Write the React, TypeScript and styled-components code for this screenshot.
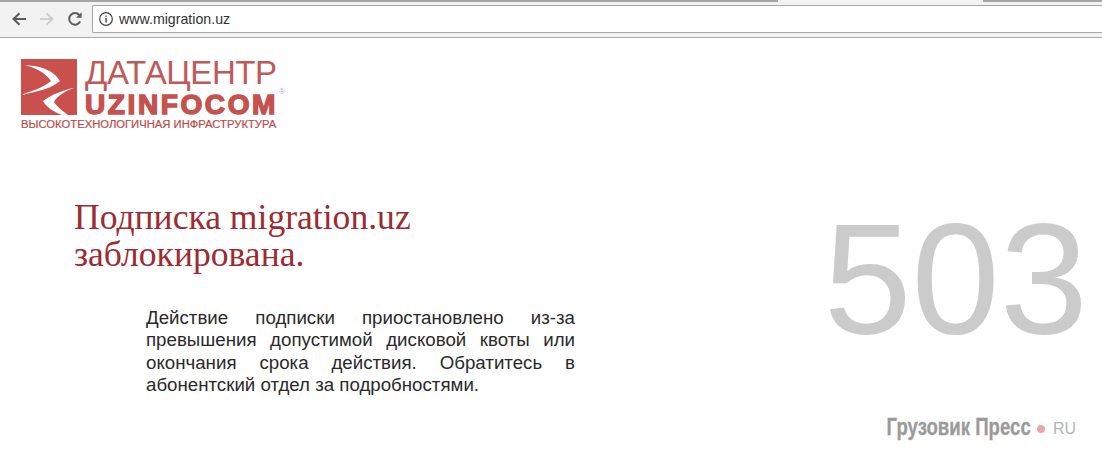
import React from 'react';
import styled, { createGlobalStyle } from 'styled-components';

const Global = createGlobalStyle`
    html, body {
        margin: 0;
        padding: 0;
        background: #fff;
    }
    body {
        width: 1102px;
        height: 456px;
        overflow: hidden;
    }
`
const Page = styled.div`
    width: 1102px;
    height: 456px;
    display: flex;
    flex-direction: column;
    overflow: hidden;
`
const TabStrip = styled.div`
    height: 2px;
    flex: none;
    background: #a6a6a6;
    display: flex;
    justify-content: flex-end;
`
const ActiveTab = styled.div`
    width: 205px;
    height: 2px;
    margin-right: 119px;
    background: #f2f2f2;
`
const Toolbar = styled.div`
    height: 36px;
    flex: none;
    box-sizing: border-box;
    background: #f2f2f2;
    border-bottom: 1px solid #a9a9a9;
    display: flex;
    align-items: flex-start;
    padding: 3px 0 0 7px;
`
const NavButton = styled.div`
    width: 23px;
    height: 28px;
    margin-right: 5px;
    display: flex;
    align-items: center;
    justify-content: center;
`
const Omnibox = styled.div`
    flex: 1;
    height: 28px;
    margin-left: 1px;
    box-sizing: border-box;
    background: #fff;
    border: 1px solid #a8a8a8;
    border-right: none;
    border-radius: 2px 0 0 2px;
    display: flex;
    align-items: center;
    padding-left: 6px;
    gap: 6px;
    font-family: "Liberation Sans", Arial, sans-serif;
    font-size: 14.2px;
    color: #333;
`
const Content = styled.div`
    flex: 1;
    display: flex;
    flex-direction: column;
    padding: 21px 14px 0 21px;
    position: relative;
`
const LogoBlock = styled.div`
    width: 270px;
    display: grid;
    grid-template-columns: 56px 1fr;
    column-gap: 8px;
    color: #c4524f;
    font-family: "Liberation Sans", Arial, sans-serif;
`
const LogoMark = styled.svg`
    grid-row: 1 / 3;
    display: block;
`
const LogoTop = styled.div`
    font-size: 33px;
    line-height: 28px;
    height: 35px;
    letter-spacing: -0.4px;
    white-space: nowrap;
    color: #bf5a5a;
`
const LogoBrand = styled.div`
    font-size: 28px;
    line-height: 21px;
    height: 21px;
    font-weight: 700;
    letter-spacing: 2.6px;
    white-space: nowrap;
    -webkit-text-stroke: 1.5px #c4524f;
    position: relative;
`
const Registered = styled.span`
    position: absolute;
    left: 194px;
    top: -6px;
    font-size: 8px;
    line-height: 8px;
    font-weight: 400;
    letter-spacing: 0;
    -webkit-text-stroke: 0;
    color: #b9a0a0;
`
const LogoTagline = styled.div`
    grid-column: 1 / 3;
    font-size: 11.25px;
    line-height: 12px;
    margin-top: 3px;
    white-space: nowrap;
    -webkit-text-stroke: 0.2px #bb4a4a;
    color: #bb4a4a;
`
const Main = styled.div`
    display: flex;
    justify-content: space-between;
    align-items: flex-start;
    margin-top: 69px;
`
const Message = styled.div`
    margin-left: 53px;
`
const Heading = styled.h1`
    margin: 0;
    font-family: "Liberation Serif", "Times New Roman", serif;
    font-weight: 400;
    font-size: 35.6px;
    line-height: 37px;
    white-space: nowrap;
    color: #9c2b33;
`
const Body = styled.p`
    margin: 34px 0 0 72px;
    width: 429px;
    font-family: "Liberation Sans", Arial, sans-serif;
    font-size: 18.7px;
    line-height: 22.3px;
    text-align: justify;
    color: #2a2a2a;
`
const ErrorCode = styled.div`
    font-family: "Liberation Sans", Arial, sans-serif;
    font-size: 158.6px;
    line-height: 150px;
    margin-top: 4px;
    color: #cbcbcb;
`
const Watermark = styled.div`
    position: absolute;
    right: 26px;
    bottom: 15px;
    display: flex;
    align-items: center;
    font-family: "Liberation Sans", Arial, sans-serif;
    color: #a8a8a8;
`
const WatermarkName = styled.span`
    font-size: 24.5px;
    font-weight: 700;
    transform: scaleX(0.76);
    transform-origin: right center;
    -webkit-text-stroke: 0.3px #9a9a9a;
    color: #9a9a9a;
`
const WatermarkDot = styled.span`
    width: 8px;
    height: 8px;
    border-radius: 50%;
    margin: 3px 8px 0 6px;
    background: #eda3ab;
`
const WatermarkTld = styled.span`
    font-size: 16px;
    margin-top: 3px;
    color: #b4b4b4;
`

const ArrowIcon = ({ color, flip }: { color: string; flip?: boolean }) => (
    <svg width="16" height="16" viewBox="0 0 16 16" style={flip ? { transform: 'scaleX(-1)' } : undefined}>
        <path d="M15 8H3M8.5 2.2L2.5 8l6 5.8" fill="none" stroke={color} strokeWidth="2" />
    </svg>
)

const ReloadIcon = () => (
    <svg width="16" height="16" viewBox="0 0 16 16">
        <path d="M13.2 10.4A5.8 5.8 0 1 1 12.3 4" fill="none" stroke="#5a5a5a" strokeWidth="2" />
        <path d="M14.6 1.2v5.6H9z" fill="#5a5a5a" />
    </svg>
)

const InfoIcon = () => (
    <svg width="14" height="14" viewBox="0 0 14 14">
        <circle cx="7" cy="7" r="6.3" fill="none" stroke="#444" strokeWidth="1.2" />
        <path d="M7 6v4.4M7 3.4v1.4" stroke="#444" strokeWidth="1.4" />
    </svg>
)

const App = () => {
    return (
        <Page>
            <Global />
            <TabStrip>
                <ActiveTab />
            </TabStrip>
            <Toolbar>
                <NavButton><ArrowIcon color="#5a5a5a" /></NavButton>
                <NavButton><ArrowIcon color="#cfcfcf" flip /></NavButton>
                <NavButton><ReloadIcon /></NavButton>
                <Omnibox>
                    <InfoIcon />
                    www.migration.uz
                </Omnibox>
            </Toolbar>
            <Content>
                <LogoBlock>
                    <LogoMark width="56" height="56" viewBox="0 0 56 56">
                        <rect width="56" height="56" fill="#c9504c" />
                        <path d="M4 6C16 7 31 9 39 22C30 30 14 33 0 36C10 32 22 29 30 22C24 13 14 9 4 6Z" fill="#fff" />
                        <path d="M53 29C42 31 32 35 22 42C25 48 33 53 41 56L47 56C42 52 36 48 33 43C36 37 44 32 53 29Z" fill="#fff" />
                    </LogoMark>
                    <LogoTop>ДАТАЦЕНТР</LogoTop>
                    <LogoBrand>UZINFOCOM<Registered>®</Registered></LogoBrand>
                    <LogoTagline>ВЫСОКОТЕХНОЛОГИЧНАЯ ИНФРАСТРУКТУРА</LogoTagline>
                </LogoBlock>
                <Main>
                    <Message>
                        <Heading>Подписка migration.uz<br />заблокирована.</Heading>
                        <Body>Действие подписки приостановлено из-за превышения допустимой дисковой квоты или окончания срока действия. Обратитесь в абонентский отдел за подробностями.</Body>
                    </Message>
                    <ErrorCode>503</ErrorCode>
                </Main>
                <Watermark>
                    <WatermarkName>Грузовик Пресс</WatermarkName>
                    <WatermarkDot />
                    <WatermarkTld>RU</WatermarkTld>
                </Watermark>
            </Content>
        </Page>
    )
}

export default App;
